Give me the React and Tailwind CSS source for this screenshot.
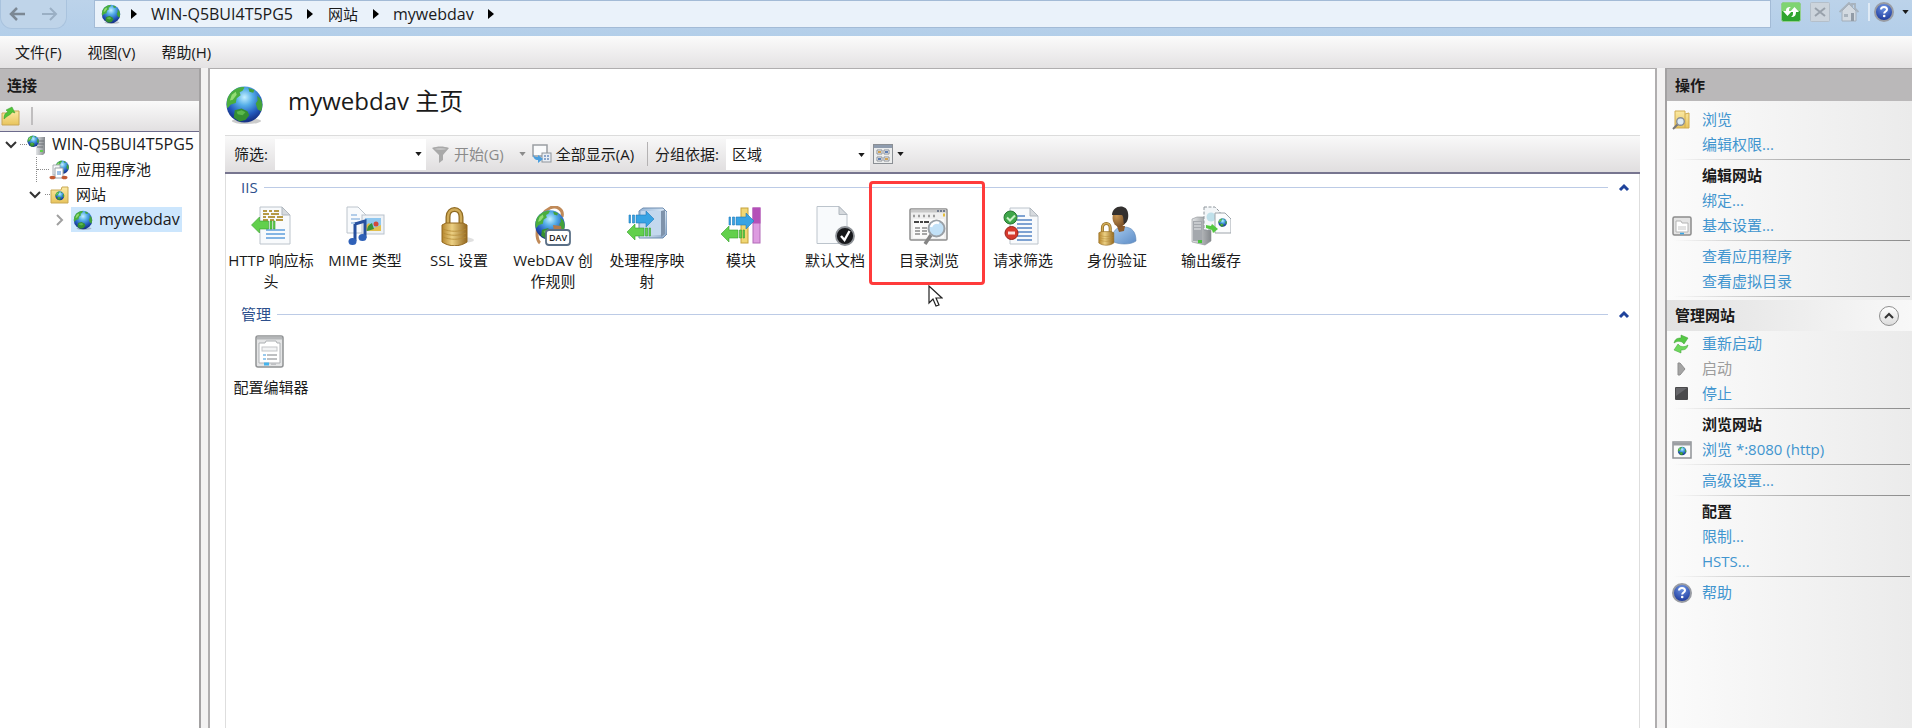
import React from 'react';

// gradients shared by all the icons
function IconDefs() {
    return (
        <svg className="absolute w-0 h-0" aria-hidden="true">
            <defs>
                <radialGradient id="ocean" cx="0.5" cy="0.3" r="0.65">
                    <stop offset="0" stopColor="#c4f0ff" />
                    <stop offset="0.35" stopColor="#55aee8" />
                    <stop offset="0.75" stopColor="#2359bd" />
                    <stop offset="1" stopColor="#17348a" />
                </radialGradient>
                <linearGradient id="gold" x1="0" x2="1" y1="0" y2="0">
                    <stop offset="0" stopColor="#b5852c" />
                    <stop offset="0.4" stopColor="#ecd083" />
                    <stop offset="1" stopColor="#94681f" />
                </linearGradient>
                <linearGradient id="folder" x1="0" x2="0" y1="0" y2="1">
                    <stop offset="0" stopColor="#fbe9a3" />
                    <stop offset="1" stopColor="#e8c45c" />
                </linearGradient>
                <linearGradient id="steel" x1="0" x2="1" y1="0" y2="0">
                    <stop offset="0" stopColor="#e2e4e6" />
                    <stop offset="1" stopColor="#84888c" />
                </linearGradient>
                <linearGradient id="box" x1="0" x2="1" y1="0" y2="1">
                    <stop offset="0" stopColor="#8fb0d4" />
                    <stop offset="0.5" stopColor="#dbe9f7" />
                    <stop offset="1" stopColor="#86a4c6" />
                </linearGradient>
                <linearGradient id="shirt" x1="0" x2="1" y1="0" y2="1">
                    <stop offset="0" stopColor="#a9cdf0" />
                    <stop offset="1" stopColor="#5d8cc6" />
                </linearGradient>
                <radialGradient id="skin" cx="0.3" cy="0.4" r="0.8">
                    <stop offset="0" stopColor="#c79552" />
                    <stop offset="1" stopColor="#6b4320" />
                </radialGradient>
                <radialGradient id="helpBlue" cx="0.5" cy="0.25" r="0.8">
                    <stop offset="0" stopColor="#6f97e6" />
                    <stop offset="1" stopColor="#142f93" />
                </radialGradient>
            </defs>
        </svg>
    );
}

function GlobeShape() {
    return (
        <g>
            <circle cx="20" cy="20" r="18.5" fill="url(#ocean)" />
            <path d="M9 5.500C13 2.500 18 1.500 20 2.500L18 6l-3 1.500 1 3-4 3-1 5-5 1.500L2.500 24C0.500 17 3 9.500 9 5.500z" fill="#4aae3e" />
            <path d="M7 10l4-3 1 3-4 5-3 1z" fill="#93dd74" />
            <path d="M24 3l6 2-1 3-4-1zM33 11l3.500 3c2.500 5 2 9 0.500 13l-3.500-2-2-6 2-3z" fill="#43a23a" />
            <path d="M10 26l7-2 6 3 2 4-4 5-6 1.500-6-4z" fill="#358f31" />
            <path d="M12 27.500l5-1.500 4 2-3 3-5-1z" fill="#5bb84b" />
        </g>
    );
}

function Globe({ className }) {
    return (
        <svg className={className} viewBox="0 0 40 40" aria-hidden="true">
            <ellipse cx="22" cy="37" rx="15" ry="3" fill="#000" opacity="0.2" />
            <GlobeShape />
        </svg>
    );
}

function Chevron({ className, d }) {
    return (
        <svg className={className} viewBox="0 0 12 12" fill="none" stroke="currentColor" aria-hidden="true">
            <path d={d} />
        </svg>
    );
}

function Caret({ className }) {
    return (
        <svg className={className} viewBox="0 0 8 5" fill="currentColor" aria-hidden="true">
            <path d="M0 0h8L4 5z" />
        </svg>
    );
}

function CrumbArrow() {
    return (
        <svg className="w-[6px] h-[10px] shrink-0" viewBox="0 0 6 10" aria-hidden="true">
            <path d="M0 0l6 5-6 5z" fill="#000" />
        </svg>
    );
}

function HelpIcon({ className }) {
    return (
        <svg className={className} viewBox="0 0 20 20" fill="none" aria-hidden="true">
            <circle cx="10" cy="10" r="9" fill="url(#helpBlue)" stroke="#999ca3" strokeWidth="2" />
            <path d="M7 7.500C7 5.500 8.500 5 10 5s3 0.800 3 2.500c0 2-2.800 2-2.800 4" stroke="#fff" strokeWidth="2" />
            <circle cx="10.200" cy="14" r="1.300" fill="#fff" />
        </svg>
    );
}

function ServerIcon() {
    return (
        <svg className="w-[20px] h-[20px]" viewBox="0 0 20 20" aria-hidden="true">
            <path d="M9 4l2-2h7v16l-2 2H9z" fill="url(#steel)" />
            <path d="M11 6h6M11 9h6M10 12h6" stroke="#6d7176" />
            <rect x="13" y="15" width="3" height="2" fill="#5fce4c" />
            <g transform="scale(0.31)">
                <GlobeShape />
            </g>
        </svg>
    );
}

function PoolIcon() {
    return (
        <svg className="w-[20px] h-[20px]" viewBox="0 0 20 20" aria-hidden="true">
            <g transform="translate(6 0) scale(0.36)">
                <GlobeShape />
            </g>
            <path d="M4 5h7v10H4z" fill="#f4f6f8" stroke="#a9aeb4" />
            <path d="M6 8h8v10H6z" fill="#fff" stroke="#9aa1a8" />
            <path d="M8 12h4M8 14h4" stroke="#3f86d4" />
            <ellipse cx="3.500" cy="17.500" rx="3" ry="1.800" fill="#c25a33" />
            <ellipse cx="15.500" cy="17.500" rx="3" ry="1.800" fill="#c25a33" />
        </svg>
    );
}

function SitesIcon() {
    return (
        <svg className="w-[20px] h-[20px]" viewBox="0 0 20 20" aria-hidden="true">
            <path d="M1 5h10l1-3h6v16H1z" fill="url(#folder)" stroke="#c9a954" />
            <g transform="translate(5 6) scale(0.24)">
                <GlobeShape />
            </g>
        </svg>
    );
}

function ConnectIcon() {
    return (
        <svg className="w-[20px] h-[20px]" viewBox="0 0 20 20" aria-hidden="true">
            <path d="M1 7h9l2-2h6v14H1z" fill="url(#folder)" stroke="#c8a656" />
            <path d="M3 13c0-4 1-6 4-7L5 4l6-3 3 6-3-1c-1 3-4 3-8 7z" fill="#4fc43a" stroke="#3a9a2c" strokeWidth="0.500" />
        </svg>
    );
}

function BrowseFolderIcon() {
    return (
        <svg className="w-[20px] h-[20px]" viewBox="0 0 20 20" fill="none" aria-hidden="true">
            <path d="M3 1h10v3l4-1v15H3z" fill="url(#folder)" stroke="#d0ab50" />
            <path d="M13 4v14" stroke="#d0ab50" />
            <path d="M6 14l-5 5" stroke="#777" strokeWidth="2" />
            <circle cx="8.500" cy="11.500" r="3.800" fill="#dcecf8" stroke="#8a8f96" strokeWidth="1.400" />
        </svg>
    );
}

function SettingsIcon() {
    return (
        <svg className="w-[20px] h-[20px]" viewBox="0 0 20 20" fill="none" aria-hidden="true">
            <rect x="1" y="1" width="18" height="18" rx="1.500" fill="#e4e4e4" stroke="#8c8c8c" strokeWidth="1.500" />
            <path d="M4 5h5l1 2h6v9H4z" fill="#fff" stroke="#b4b4b4" />
            <path d="M6 11h8M6 13h8" stroke="#c6c6c6" />
            <path d="M8 17.500h4" stroke="#3aa7e6" strokeWidth="1.500" />
        </svg>
    );
}

function RestartIcon() {
    return (
        <svg className="w-[18px] h-[20px]" viewBox="0 0 18 20" aria-hidden="true">
            <path d="M2 9c1-4 3-5 7-5V1l7 3-4 6-2-2C7 7 5 7 2 9z" fill="#55c845" stroke="#3a9f31" strokeWidth="0.500" />
            <path d="M16 11c-1 4-3 5-7 5v3l-7-3 4-6 2 2c3 1 5 1 8-1z" fill="#6ed85c" stroke="#3a9f31" strokeWidth="0.500" />
        </svg>
    );
}

function StartIcon() {
    return (
        <svg className="w-[18px] h-[20px]" viewBox="0 0 18 20" aria-hidden="true">
            <path d="M6 4h2l5 6-5 6H6z" fill="#a4a4a4" stroke="#8e8e8e" />
        </svg>
    );
}

function StopIcon() {
    return (
        <svg className="w-[18px] h-[20px]" viewBox="0 0 18 20" aria-hidden="true">
            <rect x="3" y="3" width="13" height="13" rx="1" fill="#4a4a4c" />
            <path d="M4 4h11L4 12z" fill="#66666a" />
        </svg>
    );
}

function BrowseSiteIcon() {
    return (
        <svg className="w-[20px] h-[18px]" viewBox="0 0 20 18" aria-hidden="true">
            <rect x="1" y="1" width="18" height="16" fill="#fafafa" stroke="#8f9296" strokeWidth="1.500" />
            <path d="M1 3h18" stroke="#9b9ea2" strokeWidth="3" />
            <g transform="translate(5.500 5.500) scale(0.23)">
                <GlobeShape />
            </g>
        </svg>
    );
}

function Page({ x, y, w, h }) {
    return (
        <path d={`M${x} ${y}h${w - 8}l8 8v${h - 8}h${-w}z`} fill="#f8fafc" stroke="#bcc4cc" />
    );
}

function Fold({ x, y }) {
    return <path d={`M${x} ${y}v8h8z`} fill="#d6dade" stroke="#b0b7be" />;
}

// arrow pointing left whose tail breaks up into stripes
function GreenArrow() {
    return (
        <path d="M0 8L8 0v4h9v8H8v4zM18.500 4h2v8h-2zM22 4h1.500v8H22z" fill="#62d04c" stroke="#36a02c" strokeWidth="0.600" />
    );
}

function BlueArrow() {
    return (
        <path d="M26 8L18 0v4H8v8h10v4zM4.500 4h2v8h-2zM1 4h1.500v8H1z" fill="#37a3e4" stroke="#1f78b8" strokeWidth="0.600" />
    );
}

function Padlock() {
    return (
        <g fill="none">
            <path d="M9 20V10C9 0 22 0 22 10v10" stroke="#8f6a22" strokeWidth="5" />
            <path d="M9 20V10C9 0 22 0 22 10v10" stroke="#d0ab58" strokeWidth="2.500" />
            <path d="M3 18l4-2h17l4 2v17c-7 5-18 5-25 0z" fill="url(#gold)" stroke="#94691f" />
            <path d="M4 22c7 3 16 3 23 0M4 26c7 3 16 3 23 0M4 30c7 3 16 3 23 0" stroke="#b58a34" strokeWidth="0.800" />
        </g>
    );
}

function HttpHeadersArt() {
    return (
        <>
            <Page x={9} y={1} w={30} h={37} />
            <Fold x={31} y={1} />
            <path d="M12 5h4M18 5h3M23 5h5M12 8h6M20 8h8M12 11h3M17 11h7M26 11h6M12 14h5M19 14h4M25 14h7" stroke="#b69a45" strokeWidth="2" />
            <path d="M15 24h19M15 28h19M15 32h19" stroke="#5d9fdb" strokeWidth="1.500" />
            <g transform="translate(0.500 11)">
                <GreenArrow />
            </g>
        </>
    );
}

function MimeArt() {
    return (
        <>
            <Page x={2} y={1} w={19} h={26} />
            <path d="M6 9h6M6 13h9M6 17h9" stroke="#6d9fd6" />
            <rect x="17" y="9" width="22" height="19" fill="#eef2f6" stroke="#b9c2cc" />
            <rect x="20" y="12" width="16" height="13" fill="#8fc7ef" />
            <path d="M20 25v-5l4-3 5 5 7-3v6z" fill="#e2c04e" />
            <path d="M22 25c0-5 3-7 5-8l2 6z" fill="#35913b" />
            <circle cx="31" cy="18" r="2.500" fill="#d2473b" />
            <path d="M10 18l10-3v17M10 18v17" fill="none" stroke="#27509e" strokeWidth="3" />
            <ellipse cx="7.500" cy="35.500" rx="4" ry="3.500" fill="#2f61b8" />
            <ellipse cx="17.500" cy="31.500" rx="4" ry="3.500" fill="#2f61b8" />
        </>
    );
}

function SslArt() {
    return (
        <>
            <ellipse cx="24" cy="34" rx="11" ry="3" fill="#000" opacity="0.12" />
            <g transform="translate(0 1)">
                <Padlock />
            </g>
        </>
    );
}

function WebDavArt() {
    return (
        <>
            <path d="M7 37C1 33 4 8 17 2c6-3 14 1 12 9" fill="none" stroke="#c08a58" strokeWidth="3" />
            <g transform="translate(1 3) scale(0.8)">
                <GlobeShape />
            </g>
            <path d="M20 19l8 1 1 6-8-1z" fill="#b37b4c" />
            <rect x="13" y="24" width="24" height="15" rx="3" fill="#fff" stroke="#5a6f86" strokeWidth="1.800" />
            <text x="25" y="35" fontSize="9" fontWeight="600" textAnchor="middle" fill="#222">DAV</text>
        </>
    );
}

function HandlerArt() {
    return (
        <>
            <path d="M12 5l4-3h20l4 4v22l-4 4H12z" fill="url(#box)" stroke="#6f8db0" />
            <rect x="14" y="5" width="20" height="24" rx="1" fill="#c3d8ee" />
            <path d="M34 5l4-1v24l-4 3z" fill="#7f93ab" />
            <g transform="translate(1 5)">
                <BlueArrow />
            </g>
            <g transform="translate(0 18)">
                <GreenArrow />
            </g>
        </>
    );
}

function ModulesArt() {
    return (
        <>
            <rect x="20" y="2" width="7" height="35" fill="#f0d774" stroke="#c6a23c" />
            <rect x="32" y="2" width="7" height="35" fill="#dd9be0" stroke="#b26ab8" />
            <rect x="31.500" y="1.500" width="8" height="16" fill="#b450b8" />
            <g transform="translate(7 7)">
                <BlueArrow />
            </g>
            <g transform="translate(0 20)">
                <GreenArrow />
            </g>
        </>
    );
}

function DefaultDocArt() {
    return (
        <>
            <Page x={2} y={0.5} w={30} h={37} />
            <Fold x={24} y={0.5} />
            <circle cx="30" cy="30" r="9" fill="#17181b" stroke="#8d9196" strokeWidth="1.800" />
            <path d="M26 30l3.500 4 5-9" fill="none" stroke="#fff" strokeWidth="2.400" />
        </>
    );
}

function DirBrowseArt() {
    return (
        <>
            <rect x="1" y="3" width="37" height="31" rx="1" fill="#efefef" stroke="#8e8e8e" strokeWidth="1.500" />
            <path d="M2 5h35" stroke="#c9c9c9" strokeWidth="3" />
            <path d="M28 5h2M31 5h2M34 5h2" stroke="#55617a" strokeWidth="1.500" />
            <path d="M4 10h2M9 10h2M14 10h2M19 10h2M24 10h2" stroke="#9c9c9c" strokeWidth="2.500" />
            <path d="M34 9h2" stroke="#e3bd3d" strokeWidth="3" />
            <rect x="4" y="13" width="31" height="19" fill="#fafafa" />
            <path d="M5 16h5M11 16h3M15 16h5" stroke="#444" strokeWidth="1.800" />
            <path d="M6 22h5M13 22h5M6 25h5M13 25h5M6 28h5M13 28h5" stroke="#8b8b8b" strokeWidth="1.500" />
            <path d="M22 29l-6 9" stroke="#858585" strokeWidth="3.500" />
            <circle cx="27.500" cy="22.500" r="8" fill="#c2e1f7" stroke="#9aa0a6" strokeWidth="2" />
            <path d="M22 21c1-4 5-5 8-4" fill="none" stroke="#fff" strokeWidth="2.500" />
        </>
    );
}

function FilteringArt() {
    return (
        <>
            <Page x={7} y={2} w={28} h={36} />
            <Fold x={27} y={2} />
            <path d="M14 10h8M14 14h15M14 18h15M14 22h15M14 26h15M14 30h15M14 34h15" stroke="#5585c4" strokeWidth="1.600" />
            <circle cx="7.500" cy="11.500" r="6.500" fill="#3fa64a" stroke="#25762f" />
            <path d="M4 11.500l3 3 5-5" fill="none" stroke="#c9f2c6" strokeWidth="2" />
            <circle cx="8.500" cy="27" r="6.500" fill="#d6392c" stroke="#97241b" />
            <path d="M5 27h7" stroke="#ffe1dc" strokeWidth="3" />
        </>
    );
}

function AuthArt() {
    return (
        <>
            <path d="M15 35c0-10 4-14 12-14s12 5 12 14c-5 4-18 4-24 0z" fill="url(#shirt)" stroke="#5c84b4" strokeWidth="0.600" />
            <path d="M20 20l2 6 5-1 1-5z" fill="#8a5a2c" />
            <ellipse cx="22.500" cy="12" rx="7" ry="9" fill="url(#skin)" />
            <path d="M15 9c0-10 15-12 16-2 1 5-1 10-4 11-1-4 0-7-2-9z" fill="#33302f" />
            <g transform="translate(0 16) scale(0.6)">
                <Padlock />
            </g>
        </>
    );
}

function CacheArt() {
    return (
        <>
            <path d="M1 13l5-2h12l2 2v22l-6 4-13-3z" fill="url(#steel)" stroke="#8d9196" strokeWidth="0.600" />
            <path d="M2 15h9v20H2z" fill="#a4a8ad" />
            <path d="M3 17h7M3 20h7M3 23h7" stroke="#e8eaec" />
            <rect x="7" y="34" width="4" height="3" fill="#49c43c" />
            <path d="M13 1h11l5 5v18H13z" fill="#f3f6f8" stroke="#8f969c" strokeDasharray="3 1.500" />
            <circle cx="20" cy="11" r="4.500" fill="#bfe0ea" />
            <path d="M24 7h10l6 6v14H24z" fill="#fbfcfd" stroke="#9da4aa" />
            <g transform="translate(27 12) scale(0.23)">
                <GlobeShape />
            </g>
            <path d="M15 19l5 1 1-2 6 5-5 4-1-3-6-2z" fill="#53c83f" />
        </>
    );
}

function ConfigArt() {
    return (
        <>
            <rect x="5" y="3" width="27" height="31" rx="2" fill="#e4e5e6" stroke="#909294" strokeWidth="1.500" />
            <path d="M6 5h25" stroke="#b5b7b9" strokeWidth="3" />
            <path d="M8 10h6l1-2h10l1 2h3v20H8z" fill="#fff" stroke="#aeb1b4" />
            <rect x="11" y="14" width="15" height="4" fill="#f2f3f4" stroke="#c3c5c8" />
            <path d="M12 22h3M12 26h3" stroke="#7ab9e8" strokeWidth="1.500" />
            <path d="M16 22h10M16 26h10" stroke="#a9acaf" strokeWidth="1.500" />
            <path d="M13 31h5" stroke="#45b3ec" strokeWidth="3" />
            <path d="M20 31h5" stroke="#c0c2c5" strokeWidth="2" />
        </>
    );
}

const iisFeatures = [
    { label: 'HTTP 响应标头', art: HttpHeadersArt },
    { label: 'MIME 类型', art: MimeArt },
    { label: 'SSL 设置', art: SslArt },
    { label: 'WebDAV 创作规则', art: WebDavArt },
    { label: '处理程序映射', art: HandlerArt },
    { label: '模块', art: ModulesArt },
    { label: '默认文档', art: DefaultDocArt },
    { label: '目录浏览', art: DirBrowseArt, marked: true },
    { label: '请求筛选', art: FilteringArt },
    { label: '身份验证', art: AuthArt },
    { label: '输出缓存', art: CacheArt },
];

const manageFeatures = [{ label: '配置编辑器', art: ConfigArt }];

function Feature({ label, art: Art, marked }) {
    return (
        <button className="relative w-[94px] px-[3px] flex flex-col items-center text-center">
            <svg className="w-[40px] h-[40px]" viewBox="0 0 40 40" aria-hidden="true">
                <Art />
            </svg>
            <span className="mt-[4px] leading-[21px]">{label}</span>
            {marked && (
                <>
                    <span className="absolute -left-[13px] -top-[25px] w-[116px] h-[104px] border-3 border-[#ff3b3b] rounded-sm" />
                    <svg className="absolute left-[46px] top-[79px] w-[15px] h-[23px]" viewBox="0 0 15 23" aria-hidden="true">
                        <path d="M1 1v17l4-4 3 7 3-1-3-7h6z" fill="#fff" stroke="#222" strokeWidth="1.200" />
                    </svg>
                </>
            )}
        </button>
    );
}

function FeatureGroup({ title, items }) {
    return (
        <section className="flex flex-col">
            <div className="flex items-center h-[24px] pl-[15px] pr-[9px]">
                <h2 className="text-[#2d4f8c]">{title}</h2>
                <div className="flex-1 ml-[6px] border-t border-[#bccbe6]" />
                <button className="ml-[10px]" aria-label={`折叠 ${title}`}>
                    <Chevron className="w-[12px] h-[12px] text-[#1f439b] stroke-3" d="M2 9l4-4 4 4" />
                </button>
            </div>
            <div className="flex flex-wrap pt-[7px] -ml-[2px]">
                {items.map((item) => (
                    <Feature key={item.label} {...item} />
                ))}
            </div>
        </section>
    );
}

function AddressBar() {
    return (
        <header className="flex items-start h-[36px] bg-gradient-to-b from-[#bcd3ea] to-[#b3cee9]">
            <div className="flex items-center w-[67px] h-[29px] px-[8px] justify-between rounded-b-xl border border-t-0 border-[#a9c3de] bg-[#bfd4e9]">
                <button aria-label="后退">
                    <svg className="w-[16px] h-[14px]" viewBox="0 0 16 14" fill="none" stroke="#7c8894" strokeWidth="2.500" aria-hidden="true">
                        <path d="M16 7H2M8 1L2 7l6 6" />
                    </svg>
                </button>
                <button aria-label="前进">
                    <svg className="w-[16px] h-[14px]" viewBox="0 0 16 14" fill="none" stroke="#9aafc4" strokeWidth="2" aria-hidden="true">
                        <path d="M0 7h14M8 1l6 6-6 6" />
                    </svg>
                </button>
            </div>
            <nav className="flex-1 flex items-center h-[28px] ml-[27px] pl-[6px] border border-[#a3bbd6] bg-[#eaf2fa]">
                <Globe className="w-[20px] h-[20px] mr-[10px]" />
                <CrumbArrow />
                <a href="#server" className="mx-[14px] text-base">WIN-Q5BUI4T5PG5</a>
                <CrumbArrow />
                <a href="#sites" className="mx-[15px]">网站</a>
                <CrumbArrow />
                <a href="#mywebdav" className="mx-[14px] text-base">mywebdav</a>
                <CrumbArrow />
            </nav>
            <div className="flex items-center h-[24px] pl-[10px] pr-[3px]">
                <button aria-label="刷新">
                    <svg className="w-[20px] h-[20px]" viewBox="0 0 20 20" aria-hidden="true">
                        <rect x="0.500" y="0.500" width="19" height="19" rx="2" fill="#2fa52f" stroke="#93cf8e" />
                        <rect x="1" y="1" width="18" height="8" fill="#7fd471" />
                        <path d="M2 9h3c0-3 1-4 5-4-2 1-2 2-2 4h3l-4.500 5z" fill="#fff" />
                        <path d="M18 10h-3c0 3-1 5-5 5 2-1 2-3 2-5H9l4.500-5z" fill="#fff" />
                    </svg>
                </button>
                <button className="ml-[9px]" aria-label="停止">
                    <svg className="w-[20px] h-[20px]" viewBox="0 0 20 20" fill="none" aria-hidden="true">
                        <rect x="0.500" y="0.500" width="19" height="19" rx="1" fill="#ccd4dc" stroke="#b4bfca" />
                        <path d="M5 6l10 8M15 6L5 14" stroke="#98a1ab" strokeWidth="2" />
                    </svg>
                </button>
                <button className="ml-[9px]" aria-label="主页">
                    <svg className="w-[20px] h-[20px]" viewBox="0 0 20 20" aria-hidden="true">
                        <path d="M3 9v10h14V9l-7-7z" fill="#d3dae1" stroke="#a3aeba" />
                        <path d="M0.500 10L10 1l3 3V2h3v4.500l3.500 3.500" fill="none" stroke="#a8b3be" strokeWidth="1.800" />
                        <rect x="12" y="11" width="3" height="8" fill="#929ca7" />
                        <rect x="5" y="12" width="4" height="3" fill="#a9b3bd" />
                    </svg>
                </button>
                <span className="w-[2px] h-[18px] ml-[9px] bg-[#dfeaf5]" />
                <button className="flex items-center gap-[8px] ml-[4px]" aria-label="帮助">
                    <HelpIcon className="w-[20px] h-[20px]" />
                    <Caret className="w-[7px] h-[4px]" />
                </button>
            </div>
        </header>
    );
}

function MenuBar() {
    return (
        <div className="flex items-center gap-[26px] h-[32px] pl-[15px] bg-gradient-to-b from-[#fbfbfb] to-[#e4e2e3]">
            <button>文件(F)</button>
            <button>视图(V)</button>
            <button>帮助(H)</button>
        </div>
    );
}

function Connections() {
    return (
        <aside className="w-[201px] shrink-0 flex flex-col bg-white border-t border-r-2 border-[#a3a1a2] overflow-hidden">
            <h2 className="h-[32px] pl-[7px] leading-[32px] font-bold bg-[#bab8b9]">连接</h2>
            <div className="flex items-center h-[31px] pl-[1px] bg-gradient-to-b from-[#fafafa] to-[#e2e0e1] border-b border-[#6c6b8c]">
                <button aria-label="连接到服务器">
                    <ConnectIcon />
                </button>
                <span className="w-[2px] h-[18px] ml-[10px] bg-[#c0bebf]" />
            </div>
            <ul className="leading-[25px] whitespace-nowrap">
                <li className="flex items-center pl-[5px]">
                    <Chevron className="w-[12px] h-[12px] shrink-0 stroke-2 text-[#333]" d="M1 3l5 5 5-5" />
                    <span className="w-[7px] ml-[3px] border-t border-dotted border-[#8a8a8a]" />
                    <ServerIcon />
                    <span className="ml-[5px] text-base leading-[25px]">WIN-Q5BUI4T5PG5</span>
                </li>
                <li className="flex items-center pl-[36px]">
                    <span className="self-stretch border-l border-dotted border-[#8a8a8a]" />
                    <span className="w-[12px] border-t border-dotted border-[#8a8a8a]" />
                    <PoolIcon />
                    <span className="ml-[7px]">应用程序池</span>
                </li>
                <li className="flex items-center pl-[29px]">
                    <Chevron className="w-[12px] h-[12px] shrink-0 stroke-2 text-[#333]" d="M1 3l5 5 5-5" />
                    <span className="w-[5px] ml-[4px] border-t border-dotted border-[#8a8a8a]" />
                    <SitesIcon />
                    <span className="ml-[6px]">网站</span>
                </li>
                <li className="flex items-center pl-[53px]">
                    <Chevron className="w-[12px] h-[12px] shrink-0 stroke-2 text-[#a0a0a0]" d="M4 1l5 5-5 5" />
                    <span className="flex items-center ml-[6px] px-[2px] bg-[#cce6fd]">
                        <Globe className="w-[20px] h-[20px]" />
                        <span className="ml-[6px] text-base leading-[25px]">mywebdav</span>
                    </span>
                </li>
            </ul>
        </aside>
    );
}

function FilterBar() {
    return (
        <div className="flex items-center h-[39px] pl-[9px] bg-gradient-to-b from-[#f9f9f9] to-[#e0dedf] border-t border-t-[#dcdcdc] border-b-2 border-b-[#77758f]">
            <label htmlFor="filter" className="w-[41px]">筛选:</label>
            <div className="flex items-center w-[151px] h-[31px] pr-[4px] bg-white">
                <input id="filter" type="text" className="flex-1 min-w-0 h-full px-[6px] outline-none" />
                <button aria-label="筛选历史">
                    <Caret className="w-[7px] h-[4px]" />
                </button>
            </div>
            <button className="flex items-center ml-[6px] text-[#8b8b8b]">
                <svg className="w-[17px] h-[17px] mr-[5px]" viewBox="0 0 17 17" aria-hidden="true">
                    <path d="M0 2c5-2 12-2 17 0l-6 7v5l-4 3V9z" fill="#a9a9a9" />
                    <path d="M2 3c4-1 9-1 13 0-4 1-9 1-13 0z" fill="#cfcfcf" />
                </svg>
                开始(G)
                <Caret className="w-[7px] h-[4px] ml-[15px]" />
            </button>
            <button className="flex items-center ml-[6px]">
                <svg className="w-[20px] h-[20px] mr-[4px]" viewBox="0 0 20 20" fill="none" aria-hidden="true">
                    <rect x="1" y="1" width="14" height="11" fill="#fafbfc" stroke="#9a9ea3" strokeWidth="1.500" />
                    <rect x="10" y="9" width="9" height="9" fill="#e9eef4" stroke="#8f959c" />
                    <path d="M12 12h2M15 12h2M12 15h2M15 15h2" stroke="#6d8fbc" strokeWidth="1.500" />
                    <path d="M1 10c1 3 3 3 5 3v-2l5 4-5 4v-3c-3 0-5-2-5-6z" fill="#4a9fdf" />
                </svg>
                全部显示(A)
            </button>
            <span className="w-[1px] h-[24px] ml-[13px] mr-[7px] bg-[#b4b2b3]" />
            <label htmlFor="group-by" className="mr-[7px]">分组依据:</label>
            <div className="relative w-[144px] h-[31px]">
                <select id="group-by" className="w-full h-full pl-[6px] bg-white appearance-none outline-none">
                    <option>区域</option>
                </select>
                <Caret className="absolute right-[5px] top-[14px] w-[7px] h-[4px] pointer-events-none" />
            </div>
            <button className="flex items-center gap-[4px] ml-[3px]" aria-label="视图">
                <svg className="w-[20px] h-[20px]" viewBox="0 0 20 20" aria-hidden="true">
                    <rect x="0.500" y="0.500" width="19" height="19" fill="#eceded" stroke="#8b8f94" />
                    <path d="M1 2.500h18" stroke="#8f9cae" strokeWidth="3" />
                    <path d="M4 6h5v4H4zM11 6h5v4h-5zM4 13h5v4H4zM11 13h5v4h-5z" fill="#fff" stroke="#8a8f96" />
                    <path d="M5 8h3M12 15h3" stroke="#d0a254" strokeWidth="2" />
                    <path d="M12 8h3M5 15h3" stroke="#5f7fb4" strokeWidth="2" />
                </svg>
                <Caret className="w-[7px] h-[4px]" />
            </button>
        </div>
    );
}

function Home() {
    return (
        <main className="flex-1 min-w-0 flex flex-col ml-[7px] px-[15px] bg-white border-t border-x-2 border-[#b0aeaf]">
            <div className="flex items-center h-[66px] pb-[2px]">
                <Globe className="w-[39px] h-[39px] mt-[6px]" />
                <h1 className="ml-[24px] text-2xl">mywebdav 主页</h1>
            </div>
            <FilterBar />
            <div className="flex-1 flex flex-col gap-[10px] pt-[1px] border-x border-[#dedede]">
                <FeatureGroup title="IIS" items={iisFeatures} />
                <FeatureGroup title="管理" items={manageFeatures} />
            </div>
        </main>
    );
}

function ActionTitle({ children }) {
    return <h3 className="pl-[35px] leading-[25px] font-bold">{children}</h3>;
}

function Action({ icon, disabled, children }) {
    return (
        <div className="flex items-center h-[25px] pl-[5px]">
            <span className="w-[30px] shrink-0 flex">{icon}</span>
            {disabled ? (
                <span className="text-[#9c9c9c]">{children}</span>
            ) : (
                <a href="#action" className="text-[#4195cf]">{children}</a>
            )}
        </div>
    );
}

function Separator() {
    return (
        <div className="h-[6px] pt-[2px] pl-[6px] pr-[2px]">
            <div className="h-[1px] bg-gradient-to-r from-transparent via-[#b0b0b0] to-[#8c8c8c]" />
        </div>
    );
}

function Actions() {
    return (
        <aside className="w-[247px] shrink-0 ml-[8px] border-t border-l-2 border-[#a3a1a2] bg-gradient-to-r from-[#fbfbfb] to-[#ebebeb]">
            <h2 className="h-[32px] pl-[8px] leading-[32px] font-bold bg-[#bab8b9]">操作</h2>
            <div className="pt-[6px]">
                <Action icon={<BrowseFolderIcon />}>浏览</Action>
                <Action>编辑权限...</Action>
                <Separator />
                <ActionTitle>编辑网站</ActionTitle>
                <Action>绑定...</Action>
                <Action icon={<SettingsIcon />}>基本设置...</Action>
                <Separator />
                <Action>查看应用程序</Action>
                <Action>查看虚拟目录</Action>
                <Separator />
            </div>
            <div className="flex items-center justify-between h-[31px] pl-[8px] pr-[13px] bg-gradient-to-r from-[#e2e2e2] to-[#f8f8f8]">
                <h3 className="font-bold">管理网站</h3>
                <button className="flex items-center justify-center w-[20px] h-[20px] rounded-full border border-[#8f8f8f] bg-gradient-to-b from-white to-[#dcdcdc]" aria-label="折叠">
                    <Chevron className="w-[12px] h-[12px] text-[#333] stroke-2" d="M2 8l4-4 4 4" />
                </button>
            </div>
            <Action icon={<RestartIcon />}>重新启动</Action>
            <Action icon={<StartIcon />} disabled>启动</Action>
            <Action icon={<StopIcon />}>停止</Action>
            <Separator />
            <ActionTitle>浏览网站</ActionTitle>
            <Action icon={<BrowseSiteIcon />}>浏览 *:8080 (http)</Action>
            <Separator />
            <Action>高级设置...</Action>
            <Separator />
            <ActionTitle>配置</ActionTitle>
            <Action>限制...</Action>
            <Action>HSTS...</Action>
            <Separator />
            <Action icon={<HelpIcon className="w-[20px] h-[20px]" />}>帮助</Action>
        </aside>
    );
}

function App() {
    return (
        <div className="min-h-screen flex flex-col bg-[#f3f2f2] text-[15px] leading-[21px] text-[#1a1a1a] font-['Open_Sans','Noto_Sans_CJK_SC',sans-serif]">
            <IconDefs />
            <AddressBar />
            <MenuBar />
            <div className="flex-1 flex">
                <Connections />
                <Home />
                <Actions />
            </div>
        </div>
    );
}

export default App;
